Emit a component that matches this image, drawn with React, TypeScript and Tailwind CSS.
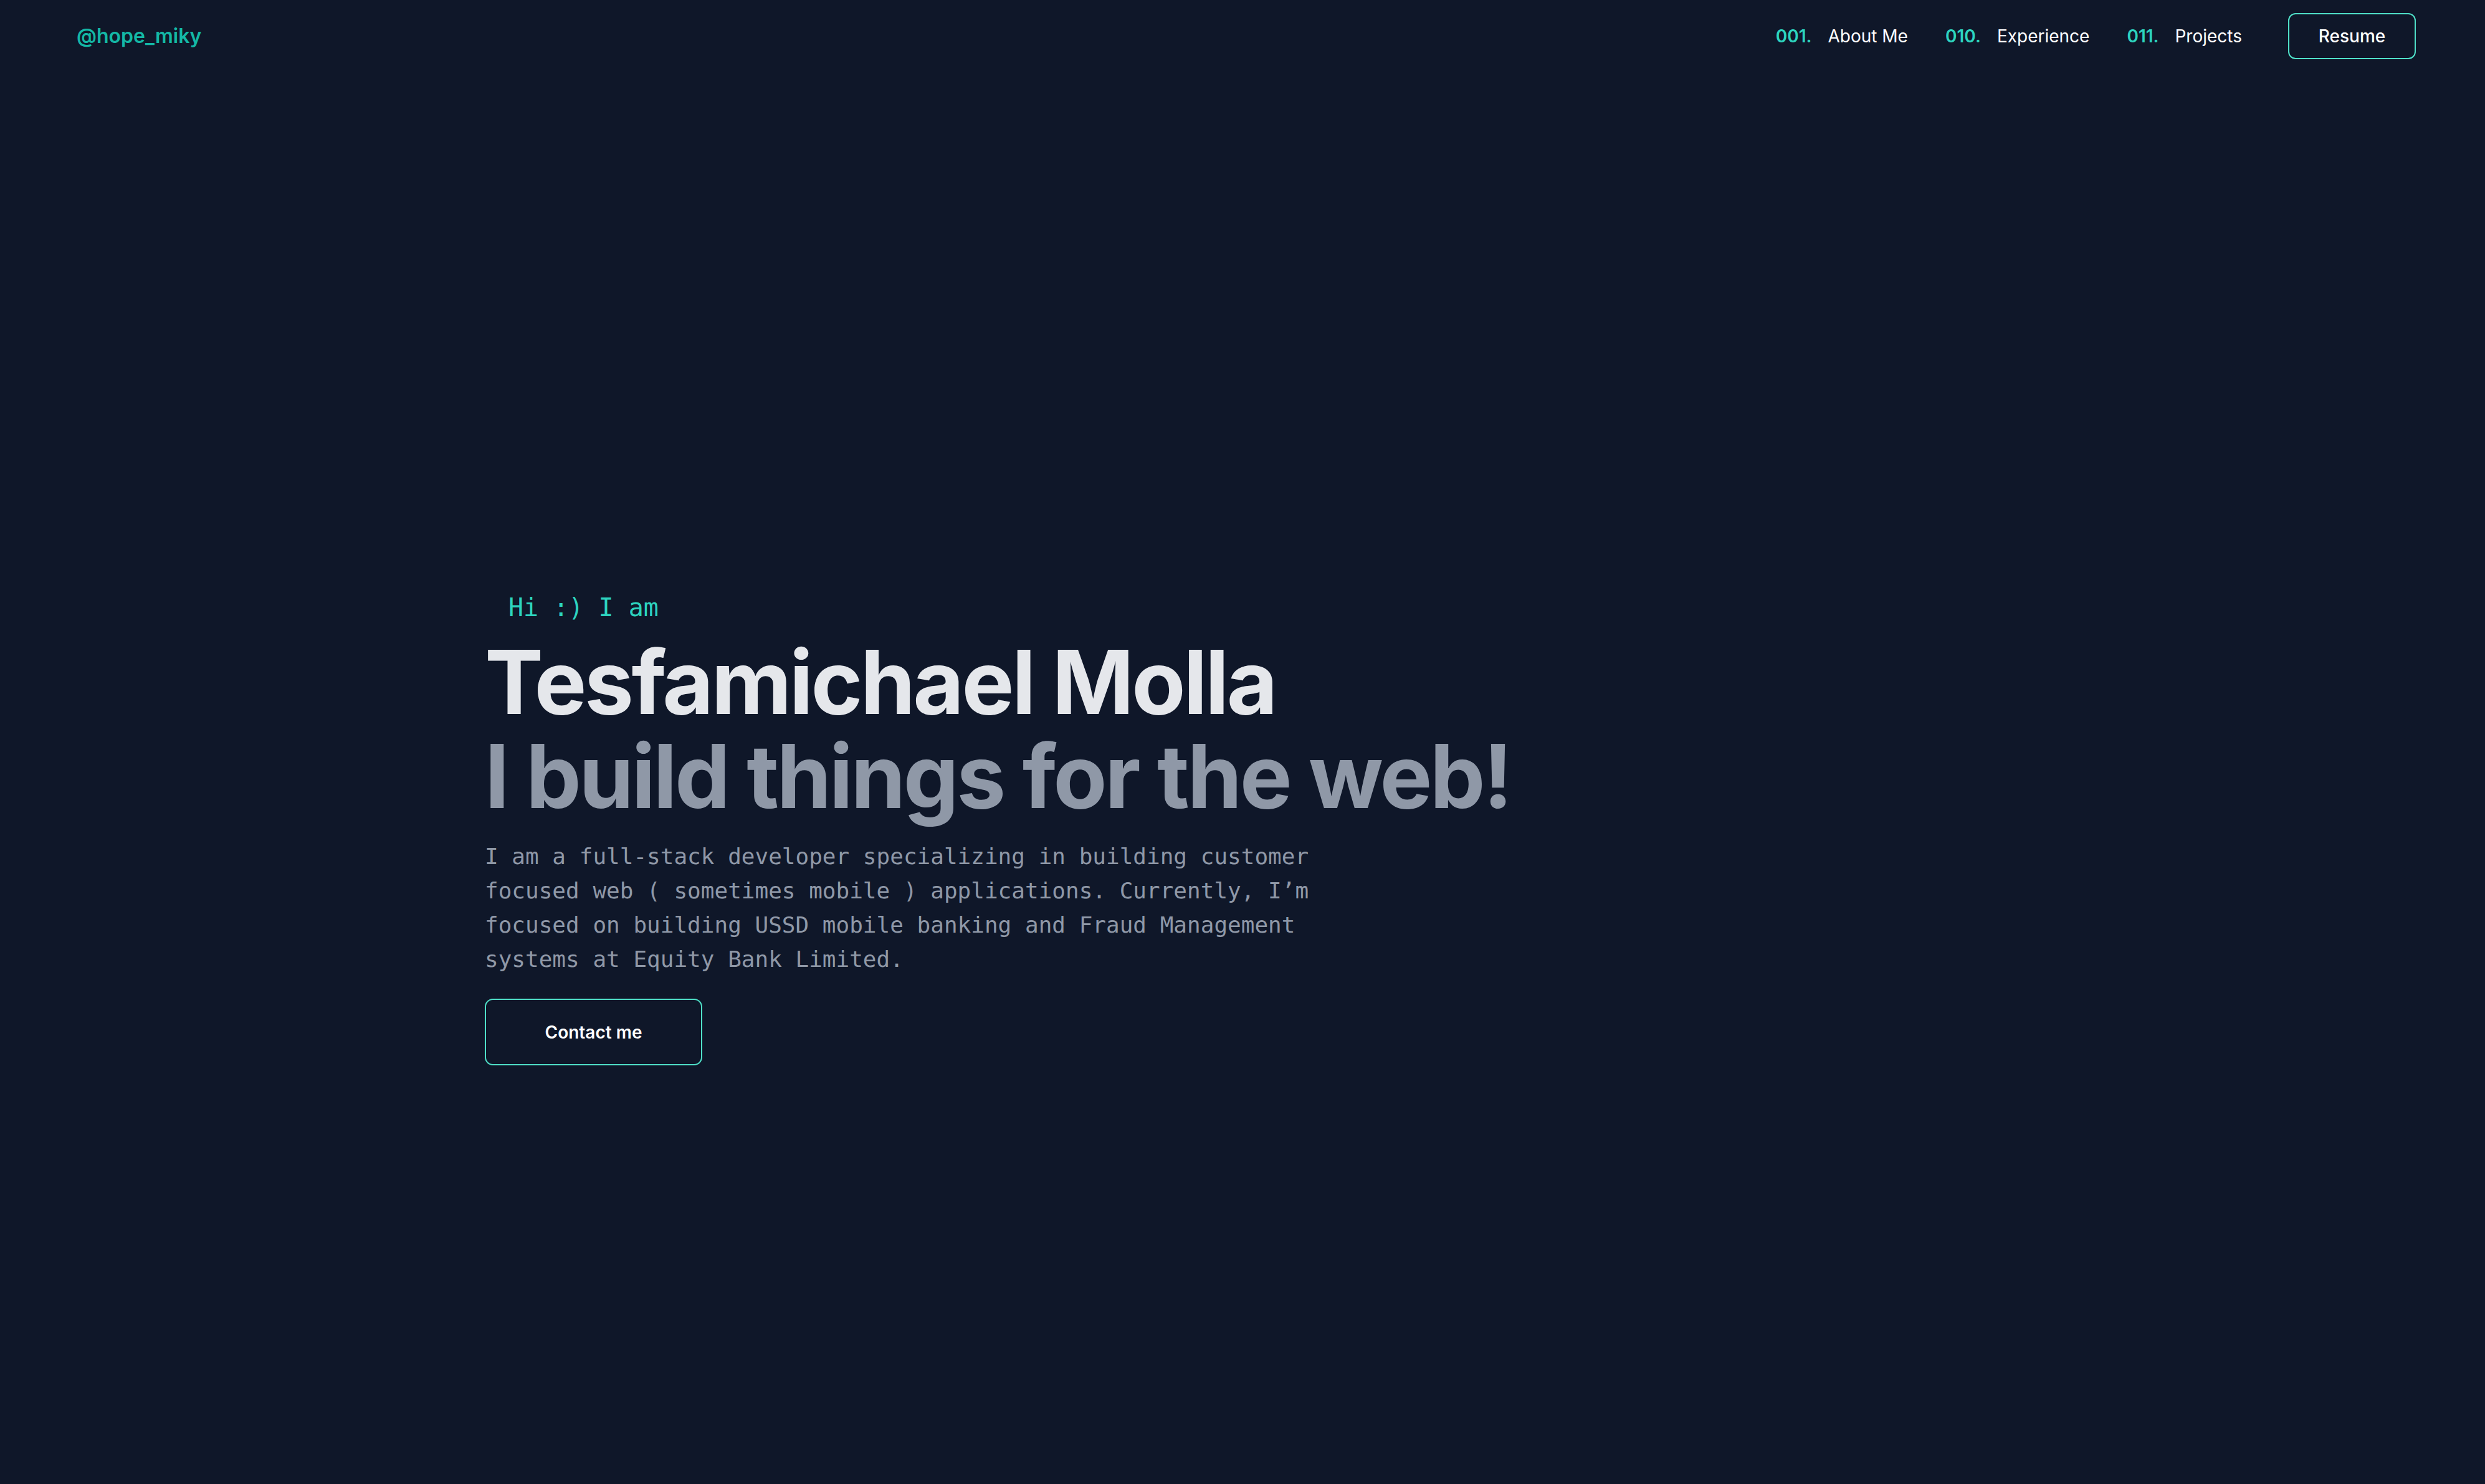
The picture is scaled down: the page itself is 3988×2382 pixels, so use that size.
import React from 'react'

const navLinks = [
  { num: '001.', label: 'About Me' },
  { num: '010.', label: 'Experience' },
  { num: '011.', label: 'Projects' },
]

export default function App() {
  return (
    <div className="min-h-screen w-full bg-[#0f1729] font-['Inter',sans-serif]">
      {/* Navbar */}
      <nav className="flex h-[116px] items-center justify-between pl-[123px] pr-[111px]">
        <a className="text-[32px] font-semibold text-[#14b8a6]">@hope_miky</a>
        <div className="flex items-center">
          <ul className="flex items-center gap-[60px]">
            {navLinks.map((l) => (
              <li key={l.num} className="flex items-center gap-[26px] text-[28px]">
                <span className="font-semibold text-[#2dd4bf]">{l.num}</span>
                <span className="text-white">{l.label}</span>
              </li>
            ))}
          </ul>
          <button className="ml-[74px] h-[74px] w-[205px] rounded-[12px] border-2 border-[#4fe0c8] text-[28px] font-medium text-white">
            Resume
          </button>
        </div>
      </nav>

      {/* Hero */}
      <section className="mx-auto max-w-[2432px] pt-[829px]">
        <p className="ml-[38px] font-['DejaVu_Sans_Mono',monospace] text-[40px] leading-[60px] text-[#2dd4bf]">
          Hi :) I am
        </p>
        <h1 className="mt-[14px] text-[141px] font-bold leading-[151px] tracking-tight">
          <span className="block text-[#e5e7eb]">Tesfamichael Molla</span>
          <span className="block text-[#8f98a7]">I build things for the web!</span>
        </h1>
        <p className="mt-[26px] max-w-[1340px] font-['DejaVu_Sans_Mono',monospace] text-[36px] leading-[55px] text-[#8f98a7]">
          I am a full-stack developer specializing in building customer focused web ( sometimes mobile ) applications.
          Currently, I’m focused on building USSD mobile banking and Fraud Management systems at Equity Bank Limited.
        </p>
        <button className="mt-[36px] h-[107px] w-[349px] rounded-[13px] border-2 border-[#4fe0c8] text-[28px] font-semibold text-white">
          Contact me
        </button>
      </section>
    </div>
  )
}
